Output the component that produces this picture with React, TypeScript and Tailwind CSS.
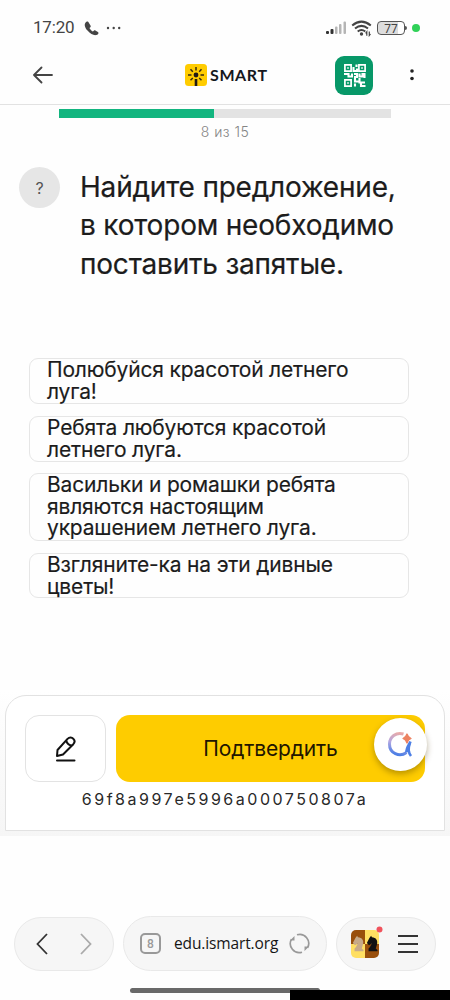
import React from 'react';

const question = ['Найдите предложение,', 'в котором необходимо', 'поставить запятые.'];

const answers = [
    { lines: ['Полюбуйся красотой летнего', 'луга!'], box: 'h-[46px] mb-3' },
    { lines: ['Ребята любуются красотой', 'летнего луга.'], box: 'h-[46px] mb-[11px]' },
    { lines: ['Васильки и ромашки ребята', 'являются настоящим', 'украшением летнего луга.'], box: 'h-[68px] mb-3' },
    { lines: ['Взгляните-ка на эти дивные', 'цветы!'], box: 'h-[45px]' },
];

const StatusBar: React.FC = () => (
    <div className="h-[50px] pt-[6px] pl-[33px] pr-[30px] flex items-center text-[#444]">
        <span className="font-['Roboto',sans-serif] text-[17px] tracking-[-0.2px] w-[42px] whitespace-nowrap">17:20</span>
        <svg className="ml-[9px]" width="15" height="15" viewBox="0 0 24 24" fill="currentColor">
            <path d="M7 1.5C5.500 .4 3.500 1 2.300 2.600c-2 2.700-1.500 7.200 3.300 12.700 4.700 5.400 10 8.200 14.200 7.200 2-.5 3.400-2 3.400-3.300 0-.7-.4-1.200-1-1.600l-4-2.500c-.9-.5-1.800-.4-2.500.3l-1.500 1.500c-2-1-4.500-3.600-5.500-5.700l1.500-1.300c.7-.7.8-1.500.4-2.400z" />
        </svg>
        <svg className="ml-[7px]" width="16" height="4" viewBox="0 0 16 4" fill="currentColor">
            <circle cx="2" cy="2" r="1.200" /><circle cx="7.700" cy="2" r="1.200" /><circle cx="13.200" cy="2" r="1.200" />
        </svg>
        <div className="flex-1" />
        <svg width="21" height="14" viewBox="0 0 21 14">
            <rect x="0" y="10" width="3" height="3" rx="1" fill="#333" />
            <rect x="4.500" y="8" width="3" height="5" rx="1" fill="#333" />
            <rect x="9" y="5.500" width="2.500" height="7.500" rx="1" fill="#b5b5b5" />
            <rect x="13" y="3" width="2.500" height="10" rx="1" fill="#b5b5b5" />
            <rect x="17.500" y=".5" width="2.500" height="12.500" rx="1" fill="#b5b5b5" />
        </svg>
        <svg className="ml-[4px]" width="22" height="17" viewBox="0 0 22 17" fill="none" stroke="#444" strokeWidth="2">
            <path d="M1.200 5.500Q10.500-2.200 19.800 5.500M4 8.500Q10.500 3.200 17 8.500M6.700 11.500Q10.500 8.500 14.300 11.500" />
            <circle cx="10.500" cy="14" r="1.700" fill="#444" stroke="none" />
            <path d="M15.800 15.800v-4l-1.200 1.500M18.300 11.500v4l1.200-1.500" strokeWidth="1.200" />
        </svg>
        <div className="ml-[4px] w-[28px] h-[14px] border-[1.5px] border-[#555] rounded-[4px] bg-[linear-gradient(90deg,#ddd_77%,#fff_77%)] flex items-center justify-center font-['Roboto',sans-serif] text-[12px] leading-none pt-px">77</div>
        <div className="w-[2px] h-[4px] bg-[#555] rounded-r-sm" />
        <div className="ml-[5px] w-2 h-2 rounded-full bg-[#30d158]" />
    </div>
);

const Logo: React.FC = () => (
    <div className="flex items-center">
        <svg width="22" height="22" viewBox="0 0 22 22">
            <rect width="22" height="22" rx="3.500" fill="#fc0" />
            <circle cx="11" cy="11" r="2.400" fill="#221a16" />
            <path d="M11 6.500V3M14.200 7.800l2.300-2.500M7.800 7.800L5.500 5.300M15.500 11H19M6.500 11H3M14.200 14l2.300 2.300M7.800 14l-2.300 2.300" stroke="#3b2c10" strokeWidth="1.500" />
            <path d="M11 15V22" stroke="#221a16" strokeWidth="2.600" />
        </svg>
        <span className="ml-[3px] font-['Lato',sans-serif] font-bold text-[16px] tracking-[0.6px] text-[#16181d]">SMART</span>
    </div>
);

const QrIcon: React.FC = () => (
    <svg width="22" height="23" viewBox="0 0 22 23" fill="none" stroke="#fff" strokeWidth="1.700">
        <path d="M.9.9h6.200v6.200H.9zM14.900.9h6.200v6.200h-6.200zM.9 15.900h6.200v6.200H.9z" />
        <path d="M3.200 4h1.600M17.200 4h1.600M3.200 19h1.600" />
        <path d="M12.500 .5v2.500M9.500 3v4H13V4.500M0 10h4.500v2.500H8V9.500M10 10h3v3h-3M15.500 9.500v3h3V10h3M20.500 10v4M11 14v3.500h3.500M11 19.500v3M15.500 14v4.500h5.500M17 18v4h4.500" strokeWidth="2.100" />
    </svg>
);

const Header: React.FC = () => (
    <div className="h-[55px] border-b border-[#e2e2e2] flex items-center pb-1">
        <svg className="ml-[33px]" width="20" height="18" viewBox="0 0 20 18" fill="none" stroke="#444" strokeWidth="1.800" strokeLinecap="round" strokeLinejoin="round">
            <path d="M19 9H1.500M8.500 1.500L1 9l7.500 7.500" />
        </svg>
        <div className="ml-[132px] w-[150px]"><Logo /></div>
        <div className="w-[38px] h-[39px] rounded-[9px] bg-[#079868] flex items-center justify-center pl-px">
            <QrIcon />
        </div>
        <svg className="ml-[36px]" width="6" height="14" viewBox="0 0 6 14" fill="#222">
            <circle cx="3" cy="3" r="1.800" /><circle cx="3" cy="10.500" r="1.800" />
        </svg>
    </div>
);

const ActionPanel: React.FC = () => (
    <div className="h-[146px] pt-[5px] px-[5px] bg-linear-to-b from-white via-[#fafafa] to-[#f6f6f6]">
        <div className="h-[136px] bg-white border border-[#e2e2e2] rounded-t-[21px] pt-[19px] pl-[19px] pr-[19px]">
            <div className="flex">
                <button className="w-[81px] h-[67px] border border-[#e3e3e3] rounded-[14px] flex items-center justify-center">
                    <svg width="22" height="26" viewBox="0 0 22 26" fill="none" stroke="#111" strokeWidth="2" strokeLinecap="round" strokeLinejoin="round">
                        <path d="M2 20l.5-6L12.500 2.900c2-2 4.400-1.600 5.800-.2 1.600 1.500 1.500 3.800 0 5.500L8 18.500zM11.300 4.500c.5 2.800 2 4.400 5 5M2 24.500h17.500" />
                    </svg>
                </button>
                <button className="relative ml-[10px] w-[309px] h-[67px] rounded-[14px] bg-[#fecc00] font-['Inter',sans-serif] text-[21px] tracking-[-0.15px] text-[#211500]">
                    Подтвердить
                    <span className="absolute left-[258px] top-[3px] w-[53px] h-[53px] rounded-full bg-white shadow-[0_3px_6px_rgba(80,60,0,0.4)] flex items-center justify-center">
                        <svg width="27" height="27" viewBox="0 0 27 27" fill="none" strokeLinecap="butt">
                            <defs>
                                <linearGradient id="ring" x1=".7" y1="0" x2=".5" y2="1">
                                    <stop stopColor="#e9aaa8" /><stop offset=".5" stopColor="#b2a7e2" /><stop offset="1" stopColor="#4d7fe5" />
                                </linearGradient>
                            </defs>
                            <path d="M16.500 3C9 .8 2.500 6 2.500 13c0 9.500 10 13.500 17 8.500" stroke="url(#ring)" strokeWidth="3" />
                            <path d="M23.500 10.500c-1 3-4.500 6-4 11 M23 12c-2 5-2.200 9 1 13" stroke="#4d7fe5" strokeWidth="2.600" />
                            <path d="M20 3q1 3.300 4 4.500-3 1.200-4 4.500-1-3.300-4-4.500 3-1.200 4-4.500z" fill="#ec8261" stroke="#ec8261" strokeWidth="1.300" strokeLinejoin="round" />
                        </svg>
                    </span>
                </button>
            </div>
            <p className="mt-[6px] ml-[-12px] mr-[-12px] text-center text-[16px] leading-[22px] tracking-[2.520px] text-[#292929] whitespace-nowrap">69f8a997e5996a000750807a</p>
        </div>
    </div>
);

const knight = 'M3 19v-3c2-1.500 2.500-4 4-6L3.500 12 1 9.500l3-6L6 1l1 1.500C12 3 14 6 13 11l-1.500 5 2 1.500V19z';

const BrowserBar: React.FC = () => (
    <div className="flex items-center pl-[14px] h-[55px] text-[#252525]">
        <div className="w-[100px] h-[54px] rounded-full border border-[#e9e9e9] bg-[#f6f6f6] flex items-center pl-[21px] gap-[32px]">
            <svg width="12" height="22" viewBox="0 0 12 22" fill="none" stroke="#333" strokeWidth="1.800"><path d="M11 1L1.500 11 11 21" /></svg>
            <svg width="12" height="22" viewBox="0 0 12 22" fill="none" stroke="#aaa" strokeWidth="1.800"><path d="M1 1l9.500 10L1 21" /></svg>
        </div>
        <div className="ml-[9px] w-[204px] h-[55px] rounded-full border border-[#e9e9e9] bg-[#f6f6f6] flex items-center pl-4">
            <span className="w-[21px] h-[21px] border-2 border-[#999] rounded-[5px] flex items-center justify-center font-['Roboto',sans-serif] font-medium text-[12px] text-[#999]">8</span>
            <span className="ml-[13px] w-[105px] font-['Open_Sans',sans-serif] text-[15.500px] tracking-[-0.130px] whitespace-nowrap text-[#151515]">edu.ismart.org</span>
            <svg className="ml-[10px]" width="21" height="21" viewBox="0 0 21 21" fill="none" stroke="#999" strokeWidth="1.700">
                <path d="M8 1.800a9 9 0 0 1 10.500 13M13 19.200a9 9 0 0 1-10.500-13" />
                <path d="M5.500 3v4.500H1zM15.500 18v-4.500H20z" fill="#999" stroke="none" />
            </svg>
        </div>
        <div className="ml-[9px] w-[100px] h-[54px] rounded-full border border-[#e9e9e9] bg-[#f6f6f6] flex items-center pl-[14px]">
            <svg className="mt-[-4px]" width="33" height="34" viewBox="0 0 33 34">
                <defs><clipPath id="board"><rect y="5" width="28" height="28" rx="5" /></clipPath></defs>
                <g clipPath="url(#board)">
                    <path fill="#994f0b" d="M0 5h14v14H0zM14 19h14v14H14z" />
                    <path fill="#ffdf62" d="M14 5h14v14H14zM0 19h14v14H0z" />
                    <path transform="translate(1 10) scale(.85)" d={knight} fill="#c7aa88" />
                    <path transform="translate(15 10) scale(.85)" d={knight} fill="#111" />
                </g>
                <circle cx="28.500" cy="4.500" r="3" fill="#f0525c" />
            </svg>
            <svg className="ml-[13px]" width="22" height="20" viewBox="0 0 22 20" stroke="#333" strokeWidth="1.800"><path d="M1 2h20M1 10h20M1 18h20" /></svg>
        </div>
    </div>
);

const App: React.FC = () => {
    return (
        <div className="w-[450px] h-[1000px] overflow-hidden bg-[#fefefe] font-['Inter',sans-serif] flex flex-col">
            <StatusBar />
            <Header />
            <div className="mt-1 ml-[59px] w-[332px] h-[9px] bg-[#e3e3e3]">
                <div className="w-[155px] h-full bg-[#12b57f]" />
            </div>
            <p className="mt-[5px] text-center text-[14px] leading-[18px] tracking-[0.5px] text-[#858585] font-light">8 из 15</p>
            <div className="mt-[27px] pl-[19px] h-[190px] flex items-start">
                <div className="mt-[-1px] w-[41px] h-[41px] rounded-full bg-[#e6e6e6] text-[#555] text-[16px] flex items-center justify-center">?</div>
                <h1 className="ml-5 text-[28px] leading-[38.300px] tracking-[-0.2px] text-[#1c1c1c] [-webkit-text-stroke:0.2px_#1c1c1c] whitespace-nowrap">
                    {question.map((line) => <span key={line} className="block">{line}</span>)}
                </h1>
            </div>
            <div className="pl-[29px] h-[332px]">
                {answers.map((answer) => (
                    <div key={answer.lines[0]} className={`${answer.box} w-[380px] border border-[#e6e6e6] rounded-[9px] pl-[17px] text-[21px] leading-[21.500px] tracking-[-0.170px] text-[#1c1c1c] [-webkit-text-stroke:0.15px_#1c1c1c] whitespace-nowrap`}>
                        {answer.lines.map((line) => <span key={line} className="block">{line}</span>)}
                    </div>
                ))}
            </div>
            <ActionPanel />
            <div className="h-20" />
            <BrowserBar />
            <div className="flex items-start pl-[130px] pt-[17px]">
                <div className="w-[190px] h-[5px] rounded-full bg-[#696969]" />
                <div className="ml-[-30px] mt-[2px] w-[160px] h-[10px] bg-black z-10" />
            </div>
        </div>
    );
};

export default App;
